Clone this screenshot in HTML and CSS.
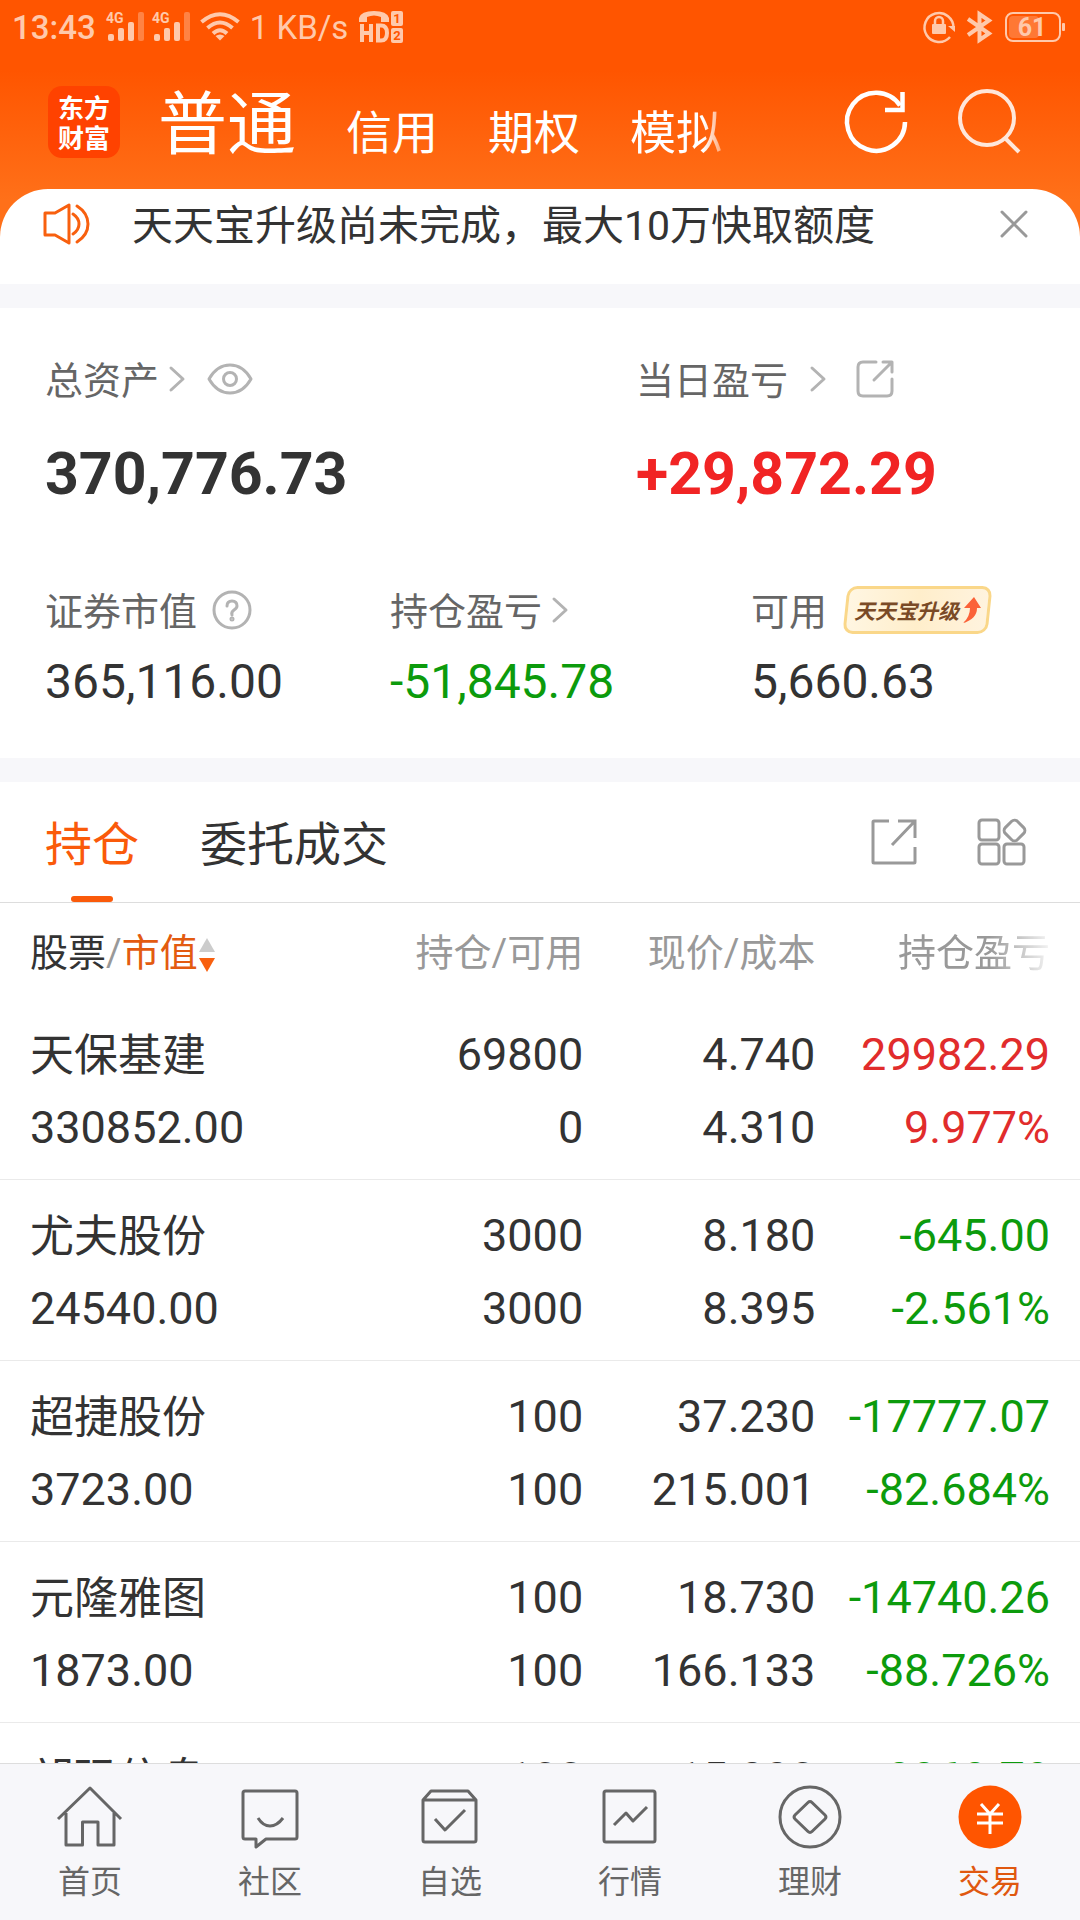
FILE: index.html
```
<!DOCTYPE html>
<html lang="zh-CN">
<head>
    <meta charset="UTF-8">
    <meta name="viewport" content="width=device-width, initial-scale=1.0">
    <title>交易</title>
    <link rel="stylesheet" href="styles.css">
</head>
<body>
    <header class="top">
        <div class="status-bar">
            <span class="time">13:43</span>
            <svg class="signal" width="38" height="30" viewBox="0 0 38 30">
                <text x="0" y="11" class="signal-text">4G</text>
                <rect x="2" y="22" width="6" height="7" rx="2"/>
                <rect x="12" y="16" width="6" height="13" rx="2"/>
                <rect x="22" y="10" width="6" height="19" rx="2"/>
                <rect x="32" y="0" width="6" height="29" rx="2" opacity="0.4"/>
            </svg>
            <svg class="signal" width="38" height="30" viewBox="0 0 38 30">
                <text x="0" y="11" class="signal-text">4G</text>
                <rect x="2" y="22" width="6" height="7" rx="2"/>
                <rect x="12" y="16" width="6" height="13" rx="2"/>
                <rect x="22" y="10" width="6" height="19" rx="2"/>
                <rect x="32" y="0" width="6" height="29" rx="2" opacity="0.4"/>
            </svg>
            <svg class="wifi" width="40" height="30" viewBox="0 0 40 30">
                <g fill="none" stroke="currentColor" stroke-width="4">
                    <path d="M1.5 10Q20 -5.5 38.5 10"/>
                    <path d="M7.5 16Q20 5 32.5 16"/>
                    <path d="M13 21.5Q20 15 27 21.5"/>
                </g>
                <path d="M15.5 24Q20 21 24.5 24L20 28.5Z"/>
            </svg>
            <span class="speed">1 KB/s</span>
            <svg width="44" height="32" viewBox="0 0 44 32">
                <path d="M0 11V7Q2 0 15 0T30 7V11H22V6Q15 3 8 6V11Z"/>
                <path d="M3 13V31M12 13V31M3 22H12M19 14.5V29.5H22Q28 29.5 28 22T22 14.5Z" fill="none" stroke="currentColor" stroke-width="4"/>
                <rect x="32" y="0" width="12" height="15" rx="2"/>
                <rect x="32" y="17" width="12" height="15" rx="2"/>
                <text x="38" y="12" class="sim-text">1</text>
                <text x="38" y="29" class="sim-text">2</text>
            </svg>
            <div class="status-right">
                <svg width="32" height="32" viewBox="0 0 32 32">
                    <path d="M30.5 17A14.5 14.5 0 1 0 27 26" fill="none" stroke="currentColor" stroke-width="2.5"/>
                    <path d="M25 15H32V21Z"/>
                    <rect x="9" y="13" width="14" height="10" rx="1"/>
                    <path d="M12 14V10a4 4 0 0 1 8 0V14" fill="none" stroke="currentColor" stroke-width="2.5"/>
                </svg>
                <svg width="26" height="32" viewBox="0 0 26 32">
                    <path d="M1 8L22 22.5L12.5 29V3L22 9.500L1 24" fill="none" stroke="currentColor" stroke-width="4"/>
                </svg>
                <svg class="battery" width="60" height="30" viewBox="0 0 60 30">
                    <rect x="1" y="1" width="54" height="28" rx="7" fill="none" stroke="currentColor" stroke-width="2"/>
                    <rect x="4" y="4" width="30" height="22" rx="4" opacity="0.3"/>
                    <rect x="57" y="11" width="3" height="8" rx="1"/>
                    <text x="27" y="24" class="battery-text">61</text>
                </svg>
            </div>
        </div>

        <div class="title-bar">
            <div class="logo"><span>东方</span><span>财富</span></div>
            <nav class="accounts">
                <a href="#" class="current">普通</a>
                <a href="#">信用</a>
                <a href="#">期权</a>
                <a href="#" class="fade-right">模拟</a>
            </nav>
            <button class="icon-btn" aria-label="刷新">
                <svg width="64" height="64" viewBox="0 0 64 64" fill="none" stroke="currentColor" stroke-width="4.5">
                    <path d="M61 32A29 29 0 1 1 56 15.5"/>
                    <path d="M58.500 2V20H41"/>
                </svg>
            </button>
            <button class="icon-btn search" aria-label="搜索">
                <svg width="64" height="64" viewBox="0 0 64 64" fill="none" stroke="currentColor" stroke-width="4">
                    <circle cx="29" cy="28" r="27"/>
                    <path d="M47 48L61 62"/>
                </svg>
            </button>
        </div>
    </header>

    <main>
        <section class="notice">
            <svg width="46" height="42" viewBox="0 0 46 42" fill="none" stroke="currentColor" stroke-width="3" stroke-linejoin="round" stroke-linecap="round">
                <path d="M2 10H12L26 2V40L12 32H2Z"/>
                <path d="M30 11Q36 15 36 21T30 31"/>
                <path d="M34 3Q45 10 45 21T34 39"/>
            </svg>
            <p>天天宝升级尚未完成，最大10万快取额度</p>
            <button class="close" aria-label="关闭">
                <svg width="28" height="28" viewBox="0 0 28 28" fill="none" stroke="currentColor" stroke-width="3" stroke-linecap="round">
                    <path d="M2 2L26 26M26 2L2 26"/>
                </svg>
            </button>
        </section>

        <section class="summary">
            <div class="totals">
                <div>
                    <div class="label"><span>总资产</span>
                        <svg class="chevron" width="16" height="26" viewBox="0 0 16 26"><path d="M2 2L14 13L2 24"/></svg>
                        <svg class="eye" width="46" height="32" viewBox="0 0 46 32">
                            <path d="M2 16Q10 2 23 2T44 16Q36 30 23 30T2 16Z"/>
                            <circle cx="23" cy="16" r="6.5"/>
                        </svg>
                    </div>
                    <div class="big">370,776.73</div>
                </div>
                <div>
                    <div class="label"><span>当日盈亏</span>
                        <svg class="chevron wide" width="16" height="26" viewBox="0 0 16 26"><path d="M2 2L14 13L2 24"/></svg>
                        <svg class="share" width="38" height="38" viewBox="0 0 38 38">
                            <path d="M20 2H7Q2 2 2 7V31Q2 36 7 36H31Q36 36 36 31V19M27 2H36V12M35 3L18 20"/>
                        </svg>
                    </div>
                    <div class="big red">+29,872.29</div>
                </div>
            </div>
            <div class="details">
                <div>
                    <div class="label"><span>证券市值</span>
                        <svg class="help" width="40" height="40" viewBox="0 0 40 40">
                            <circle cx="20" cy="20" r="18"/>
                            <path d="M15 16Q15 11 20 11T25 16Q25 18 22 20T20 25"/>
                            <circle cx="20" cy="29" r="1"/>
                        </svg>
                    </div>
                    <div class="value">365,116.00</div>
                </div>
                <div>
                    <div class="label"><span>持仓盈亏</span>
                        <svg class="chevron" width="16" height="26" viewBox="0 0 16 26"><path d="M2 2L14 13L2 24"/></svg>
                    </div>
                    <div class="value green">-51,845.78</div>
                </div>
                <div>
                    <div class="label"><span>可用</span>
                        <button class="upgrade">天天宝升级
                            <svg width="18" height="26" viewBox="0 0 18 26"><path d="M11 0L18 11H14Q14 22 0 26Q7 20 7 11H1Z"/></svg>
                        </button>
                    </div>
                    <div class="value">5,660.63</div>
                </div>
            </div>
        </section>

        <section class="holdings">
            <div class="tabs">
                <button class="tab active">持仓</button>
                <button class="tab">委托成交</button>
                <div class="tools">
                    <button class="tool" aria-label="分享">
                        <svg width="48" height="48" viewBox="0 0 48 48">
                            <path d="M19 3H4Q3 3 3 4V44Q3 45 4 45H44Q45 45 45 44V29M28 3H45V20M44 4L22 27"/>
                        </svg>
                    </button>
                    <button class="tool" aria-label="更多">
                        <svg width="50" height="50" viewBox="0 0 50 50">
                            <rect x="2" y="3" width="20" height="20" rx="3"/>
                            <rect x="2" y="27" width="20" height="20" rx="3"/>
                            <rect x="27" y="27" width="20" height="20" rx="3"/>
                            <rect x="29" y="5" width="17" height="17" rx="4" transform="rotate(45 37.5 13.5)"/>
                        </svg>
                    </button>
                </div>
            </div>
            <table>
                <thead>
                    <tr>
                        <th><span class="dark">股票</span>/<span class="orange">市值</span><svg class="sort" width="16" height="34" viewBox="0 0 16 34"><path d="M8 0L16 14H0Z" fill="#ccc"/><path d="M0 20H16L8 34Z" fill="#f8600f"/></svg></th>
                        <th>持仓/可用</th>
                        <th>现价/成本</th>
                        <th><span class="fade-right">持仓盈亏</span></th>
                    </tr>
                </thead>
                <tbody>
                    <tr>
                        <td><span class="name">天保基建</span><span>330852.00</span></td>
                        <td><span>69800</span><span>0</span></td>
                        <td><span>4.740</span><span>4.310</span></td>
                        <td class="up"><span>29982.29</span><span>9.977%</span></td>
                    </tr>
                    <tr>
                        <td><span class="name">尤夫股份</span><span>24540.00</span></td>
                        <td><span>3000</span><span>3000</span></td>
                        <td><span>8.180</span><span>8.395</span></td>
                        <td class="green"><span>-645.00</span><span>-2.561%</span></td>
                    </tr>
                    <tr>
                        <td><span class="name">超捷股份</span><span>3723.00</span></td>
                        <td><span>100</span><span>100</span></td>
                        <td><span>37.230</span><span>215.001</span></td>
                        <td class="green"><span>-17777.07</span><span>-82.684%</span></td>
                    </tr>
                    <tr>
                        <td><span class="name">元隆雅图</span><span>1873.00</span></td>
                        <td><span>100</span><span>100</span></td>
                        <td><span>18.730</span><span>166.133</span></td>
                        <td class="green"><span>-14740.26</span><span>-88.726%</span></td>
                    </tr>
                    <tr>
                        <td><span class="name">朗玛信息</span></td>
                        <td><span>100</span></td>
                        <td><span>15.890</span></td>
                        <td class="green"><span>-8968.78</span></td>
                    </tr>
                </tbody>
            </table>
        </section>
    </main>

    <nav class="bottom-nav">
        <a href="#">
            <svg width="66" height="66" viewBox="0 0 66 66">
                <path d="M1 34L33 3L64 34M9 28V60H25.5V37H41V60H57V28"/>
            </svg>
            首页
        </a>
        <a href="#">
            <svg width="66" height="66" viewBox="0 0 66 66">
                <path d="M8 6H58Q60 6 60 8V52Q60 54 58 54H29L19 62V54H8Q6 54 6 52V8Q6 6 8 6ZM21 33Q26 41 33 41T46 33"/>
            </svg>
            社区
        </a>
        <a href="#">
            <svg width="66" height="66" viewBox="0 0 66 66">
                <path d="M6 15L14 6H51L59 15V55Q59 57 57 57H8Q6 57 6 55ZM6 15H59M18 34L28 45L48 25"/>
            </svg>
            自选
        </a>
        <a href="#">
            <svg width="66" height="66" viewBox="0 0 66 66">
                <rect x="7" y="6" width="51" height="51" rx="2"/>
                <path d="M17 40L29 28L36 36L50 22"/>
            </svg>
            行情
        </a>
        <a href="#">
            <svg width="66" height="66" viewBox="0 0 66 66">
                <circle cx="33" cy="32" r="30"/>
                <path d="M31 17.5Q33 15.5 35 17.5L48 30Q50 32 48 34L35 46.5Q33 48.5 31 46.5L18 34Q16 32 18 30Z"/>
            </svg>
            理财
        </a>
        <a href="#" class="active">
            <svg width="66" height="66" viewBox="0 0 66 66">
                <circle cx="33" cy="32" r="31.5"/>
                <path d="M24 19L33 29L42 19M33 28V49M20 29H46M20 38H46"/>
            </svg>
            交易
        </a>
    </nav>
</body>
</html>
```
FILE: styles.css
```
* {
    margin: 0;
    padding: 0;
    box-sizing: border-box;
}

body {
    height: 100vh;
    display: flex;
    flex-direction: column;
    overflow: hidden;
    background: #fff;
    color: #333;
    font-family: Roboto, "Noto Sans CJK SC", sans-serif;
}

a {
    color: inherit;
    text-decoration: none;
}

button {
    border: none;
    background: none;
    color: inherit;
    font: inherit;
    cursor: pointer;
}

svg {
    display: block;
    flex-shrink: 0;
    overflow: visible;
}

/* header */
.top {
    flex-shrink: 0;
    background: linear-gradient(#ff5500 70px, #ff7019 200px);
    color: #fff;
    padding-bottom: 80px;
}

.status-bar {
    display: flex;
    align-items: center;
    height: 54px;
    padding: 0 15px 0 12px;
    color: #ffc9ab;
    fill: currentColor;
}

.time {
    font-size: 33px;
    font-weight: 500;
    margin-right: 10px;
}

.signal {
    margin-right: 8px;
}

.signal-text {
    font-size: 14px;
    font-weight: 700;
}

.wifi {
    margin: 0 10px 0 2px;
}

.speed {
    font-size: 33px;
    margin-right: 11px;
}

.sim-text {
    font-size: 13px;
    font-weight: 700;
    text-anchor: middle;
    fill: #ff5500;
}

.status-right {
    display: flex;
    align-items: center;
    gap: 12px;
    margin-left: auto;
}

.battery-text {
    font-size: 25px;
    font-weight: 700;
    text-anchor: middle;
}

.title-bar {
    display: flex;
    align-items: center;
    height: 135px;
    padding: 0 58px 0 48px;
}

.logo {
    display: flex;
    flex-direction: column;
    justify-content: center;
    align-items: center;
    width: 72px;
    height: 72px;
    border-radius: 14px;
    background: #ff4200;
    font-family: "Noto Sans CJK SC", sans-serif;
    font-size: 26px;
    font-weight: 700;
    line-height: 30px;
}

.accounts {
    display: flex;
    align-items: baseline;
    gap: 50px;
    flex: 1;
    margin-left: 38px;
    padding-top: 15px;
    font-size: 46px;
    line-height: 80px;
}

.accounts .current {
    font-size: 69px;
}

.fade-right {
    -webkit-mask-image: linear-gradient(to right, #000 60%, transparent 105%);
    mask-image: linear-gradient(to right, #000 60%, transparent 105%);
}

.accounts .fade-right {
    -webkit-mask-image: linear-gradient(to right, #000 80%, transparent 115%);
    mask-image: linear-gradient(to right, #000 80%, transparent 115%);
}

.icon-btn {
    margin-left: 50px;
}

.search {
    opacity: 0.85;
}

/* content */
main {
    flex: 1;
    min-height: 0;
    overflow: hidden;
    margin-top: -80px;
    border-radius: 48px 48px 0 0;
    background: #fff;
}

.notice {
    display: flex;
    align-items: center;
    height: 95px;
    padding: 0 52px 25px 43px;
    font-size: 41px;
    color: #f8600f;
}

.notice p {
    flex: 1;
    margin-left: 43px;
    padding-bottom: 5px;
    color: #333;
}

.close {
    color: #999;
}

.summary {
    padding: 39px 45px 46px;
    border-top: 24px solid #f7f7fa;
    border-bottom: 24px solid #f7f7fa;
}

.totals {
    display: grid;
    grid-template-columns: 591fr 399fr;
}

.details {
    display: grid;
    grid-template-columns: 345fr 361fr 284fr;
    margin-top: 68px;
}

.label {
    display: flex;
    align-items: center;
    height: 64px;
    font-size: 38px;
    color: #666;
    white-space: nowrap;
}

.label span {
    padding-bottom: 4px;
}

.label > svg {
    fill: none;
    stroke: #b3b3b3;
    stroke-width: 3;
    stroke-linecap: round;
    stroke-linejoin: round;
}

.chevron {
    margin-left: 10px;
}

.chevron.wide {
    margin-left: 22px;
}

.eye {
    margin-left: 22px;
}

.share {
    margin-left: 30px;
}

.help {
    margin-left: 15px;
}

.big {
    font-size: 59px;
    font-weight: 700;
    line-height: 72px;
    margin-top: 27px;
}

.value {
    font-size: 48px;
    line-height: 60px;
    margin-top: 10px;
}

.red {
    color: #f12424;
}

.up {
    color: #e12c2c;
}

.green {
    color: #0c9b0c;
}

.orange {
    color: #e35b10;
}

.dark {
    color: #333;
}

.upgrade {
    position: relative;
    display: flex;
    align-items: center;
    gap: 4px;
    height: 48px;
    margin-left: 18px;
    padding: 0 9px;
    color: #7a4a26;
    font-size: 21px;
    font-style: italic;
    font-weight: 700;
}

.upgrade::before {
    content: "";
    position: absolute;
    inset: 0;
    z-index: -1;
    border: 3px solid #fad789;
    border-radius: 10px;
    background: linear-gradient(90deg, #fff6e2, #ffeecb, #fff3de);
    transform: skewX(-6deg);
}

.upgrade svg {
    fill: #fb6238;
}

.details,
.upgrade {
    isolation: isolate;
}

/* holdings */
.tabs {
    display: flex;
    align-items: center;
    gap: 61px;
    height: 121px;
    padding: 0 53px 0 45px;
    border-bottom: 1px solid #ddd;
}

.tab {
    position: relative;
    height: 120px;
    padding-bottom: 4px;
    font-size: 47px;
}

.tab.active {
    color: #fa5a0a;
}

.tab.active::after {
    content: "";
    position: absolute;
    left: 50%;
    bottom: 0;
    width: 42px;
    height: 6px;
    margin-left: -21px;
    border-radius: 3px;
    background: #fa5a0a;
}

.tools {
    display: flex;
    gap: 59px;
    margin-left: auto;
}

.tool svg {
    fill: none;
    stroke: #999;
    stroke-width: 3;
}

table {
    width: 100%;
    table-layout: fixed;
    border-collapse: collapse;
}

th {
    width: 21.5%;
    height: 96px;
    padding-bottom: 4px;
    font-size: 38px;
    font-weight: 400;
    color: #999;
    text-align: right;
    white-space: nowrap;
}

th:first-child {
    width: 32.5%;
}

th:last-child {
    width: 24.5%;
}

th:first-child,
td:first-child {
    padding-left: 30px;
    text-align: left;
}

th:last-child,
td:last-child {
    padding-right: 30px;
}

.sort {
    display: inline-block;
    margin-left: 1px;
    vertical-align: middle;
}

td {
    padding: 19px 0 15px;
    border-bottom: 1px solid #eaeaea;
    font-size: 45px;
    line-height: 73px;
    text-align: right;
    vertical-align: top;
}

td span {
    display: block;
    height: 73px;
}

td .name {
    font-size: 44px;
    line-height: 76px;
}

/* bottom navigation */
.bottom-nav {
    display: grid;
    grid-template-columns: repeat(6, 1fr);
    flex-shrink: 0;
    height: 157px;
    border-top: 1px solid #ddd;
    background: #f7f7fa;
}

.bottom-nav a {
    display: flex;
    flex-direction: column;
    align-items: center;
    padding-top: 21px;
    font-size: 32px;
    line-height: 62px;
    color: #666;
}

.bottom-nav svg {
    fill: none;
    stroke: currentColor;
    stroke-width: 3;
    stroke-linejoin: round;
}

.bottom-nav .active {
    color: #e0580f;
}

.bottom-nav .active circle {
    fill: #ff5500;
    stroke: none;
}

.bottom-nav .active path {
    stroke: #fff;
    stroke-width: 3;
}
```
